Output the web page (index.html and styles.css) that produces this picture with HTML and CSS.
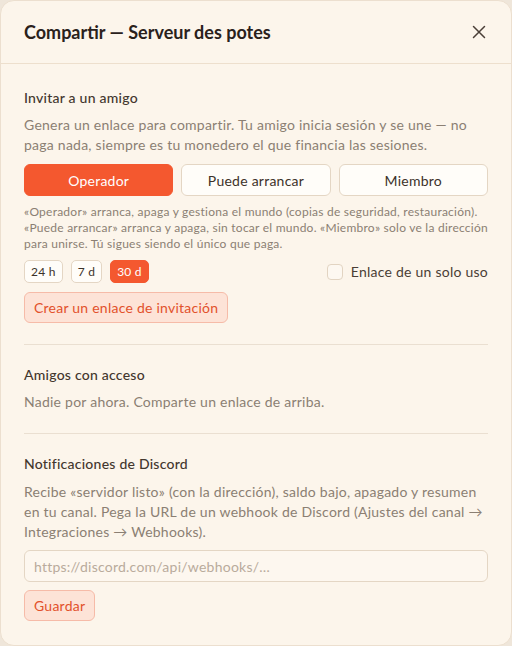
FILE: index.html
```html
<!DOCTYPE html>
<html lang="es">
<head>
<meta charset="utf-8">
<title>Compartir</title>
<link rel="stylesheet" href="styles.css">
</head>
<body>
<div class="modal">
  <header class="modal-header">
    <h1 class="title">Compartir — Serveur des potes</h1>
    <button class="close" aria-label="Cerrar">
      <svg width="14" height="14" viewBox="0 0 14 14"><path d="M1.5 1.5 L12.5 12.5 M12.5 1.5 L1.5 12.5" stroke="#4a3f37" stroke-width="1.5" stroke-linecap="round" fill="none"/></svg>
    </button>
  </header>
  <div class="modal-body">
    <section class="section">
      <h2 class="heading">Invitar a un amigo</h2>
      <p class="desc">Genera un enlace para compartir. Tu amigo inicia sesión y se une — no paga nada, siempre es tu monedero el que financia las sesiones.</p>
      <div class="roles">
        <button class="role active">Operador</button>
        <button class="role">Puede arrancar</button>
        <button class="role">Miembro</button>
      </div>
      <p class="note">«Operador» arranca, apaga y gestiona el mundo (copias de seguridad, restauración). «Puede arrancar» arranca y apaga, sin tocar el mundo. «Miembro» solo ve la dirección para unirse. Tú sigues siendo el único que paga.</p>
      <div class="options">
        <div class="chips">
          <button class="chip">24 h</button>
          <button class="chip">7 d</button>
          <button class="chip active">30 d</button>
        </div>
        <label class="check"><span class="box"></span>Enlace de un solo uso</label>
      </div>
      <button class="soft-btn">Crear un enlace de invitación</button>
    </section>
    <section class="section">
      <h2 class="heading">Amigos con acceso</h2>
      <p class="desc">Nadie por ahora. Comparte un enlace de arriba.</p>
    </section>
    <section class="section last">
      <h2 class="heading">Notificaciones de Discord</h2>
      <p class="desc desc-discord">Recibe «servidor listo» (con la dirección), saldo bajo, apagado y resumen en tu canal. Pega la URL de un webhook de Discord (Ajustes del canal → Integraciones → Webhooks).</p>
      <div class="input">https://discord.com/api/webhooks/…</div>
      <button class="soft-btn save">Guardar</button>
    </section>
  </div>
</div>
</body>
</html>
```
FILE: styles.css
```css
* { box-sizing: border-box; }
html, body { margin: 0; padding: 0; }
body {
  background: #efe6da;
  font-family: "Lato", "Liberation Sans", sans-serif;
  color: #3d3229;
  letter-spacing: 0.015em;
}
button { letter-spacing: inherit; }
.modal {
  width: 512px;
  height: 646px;
  background: #fcf5eb;
  border: 1px solid #ecdfcf;
  border-radius: 14px;
  overflow: hidden;
}
.modal-header {
  height: 63px;
  padding: 0 23px;
  display: flex;
  align-items: center;
  justify-content: space-between;
  border-bottom: 1px solid #eddfcd;
}
.title {
  margin: 0;
  font-size: 18px;
  font-weight: 700;
  color: #2a211b;
  letter-spacing: 0;
}
.close {
  border: 0;
  background: none;
  padding: 0;
  width: 14px;
  height: 14px;
  display: flex;
  margin-right: 2px;
}
.modal-body { padding: 0 23px; }
.section {
  padding: 24px 0 21px;
  border-bottom: 1px solid #eadfd1;
}
.section + .section { padding-top: 20px; }
.section.last { border-bottom: 0; padding-bottom: 0; }
.heading {
  margin: 0;
  font-size: 14px;
  line-height: 20px;
  font-weight: 500;
  color: #43372e;
}
.desc {
  margin: 7px 0 0;
  font-size: 14px;
  line-height: 20px;
  color: #8b7f73;
}
.desc-discord { margin-top: 8px; }
.roles {
  margin-top: 9px;
  display: grid;
  grid-template-columns: 1fr 1fr 1fr;
  gap: 8px;
}
.role {
  height: 32px;
  border-radius: 6px;
  border: 1px solid #e4d6c4;
  background: #fffdf9;
  font-family: inherit;
  font-size: 14px;
  color: #3d3229;
}
.role.active {
  background: #f4582f;
  border-color: #f4582f;
  color: #fff;
}
.note {
  margin: 8px 0 0;
  font-size: 12px;
  line-height: 16px;
  color: #8b7f73;
}
.options {
  margin-top: 8px;
  display: flex;
  align-items: center;
  justify-content: space-between;
}
.chips { display: flex; gap: 8px; }
.chip {
  height: 23px;
  padding: 0 6px;
  border: 1px solid #e4d6c4;
  border-radius: 5px;
  background: #fffdf9;
  font-family: inherit;
  font-size: 12px;
  color: #3d3229;
}
.chip.active {
  background: #f4582f;
  border-color: #f4582f;
  color: #fff;
}
.check {
  display: flex;
  align-items: center;
  gap: 8px;
  font-size: 14px;
  color: #4a3e35;
}
.box {
  width: 16px;
  height: 16px;
  border: 1px solid #e2d4c2;
  border-radius: 4px;
  background: #fdf8f1;
}
.soft-btn {
  display: block;
  margin-top: 9px;
  height: 31px;
  padding: 0 9px;
  border: 1px solid #f6bba8;
  border-radius: 6px;
  background: #fde3d7;
  font-family: inherit;
  font-size: 14px;
  color: #e2512b;
}
.input {
  margin-top: 8px;
  height: 32px;
  padding: 0 9px;
  display: flex;
  align-items: center;
  border: 1px solid #e4d6c4;
  border-radius: 6px;
  background: #fdf7ef;
  font-size: 14px;
  color: #b9ab9c;
}
.save { margin-top: 8px; }
```
